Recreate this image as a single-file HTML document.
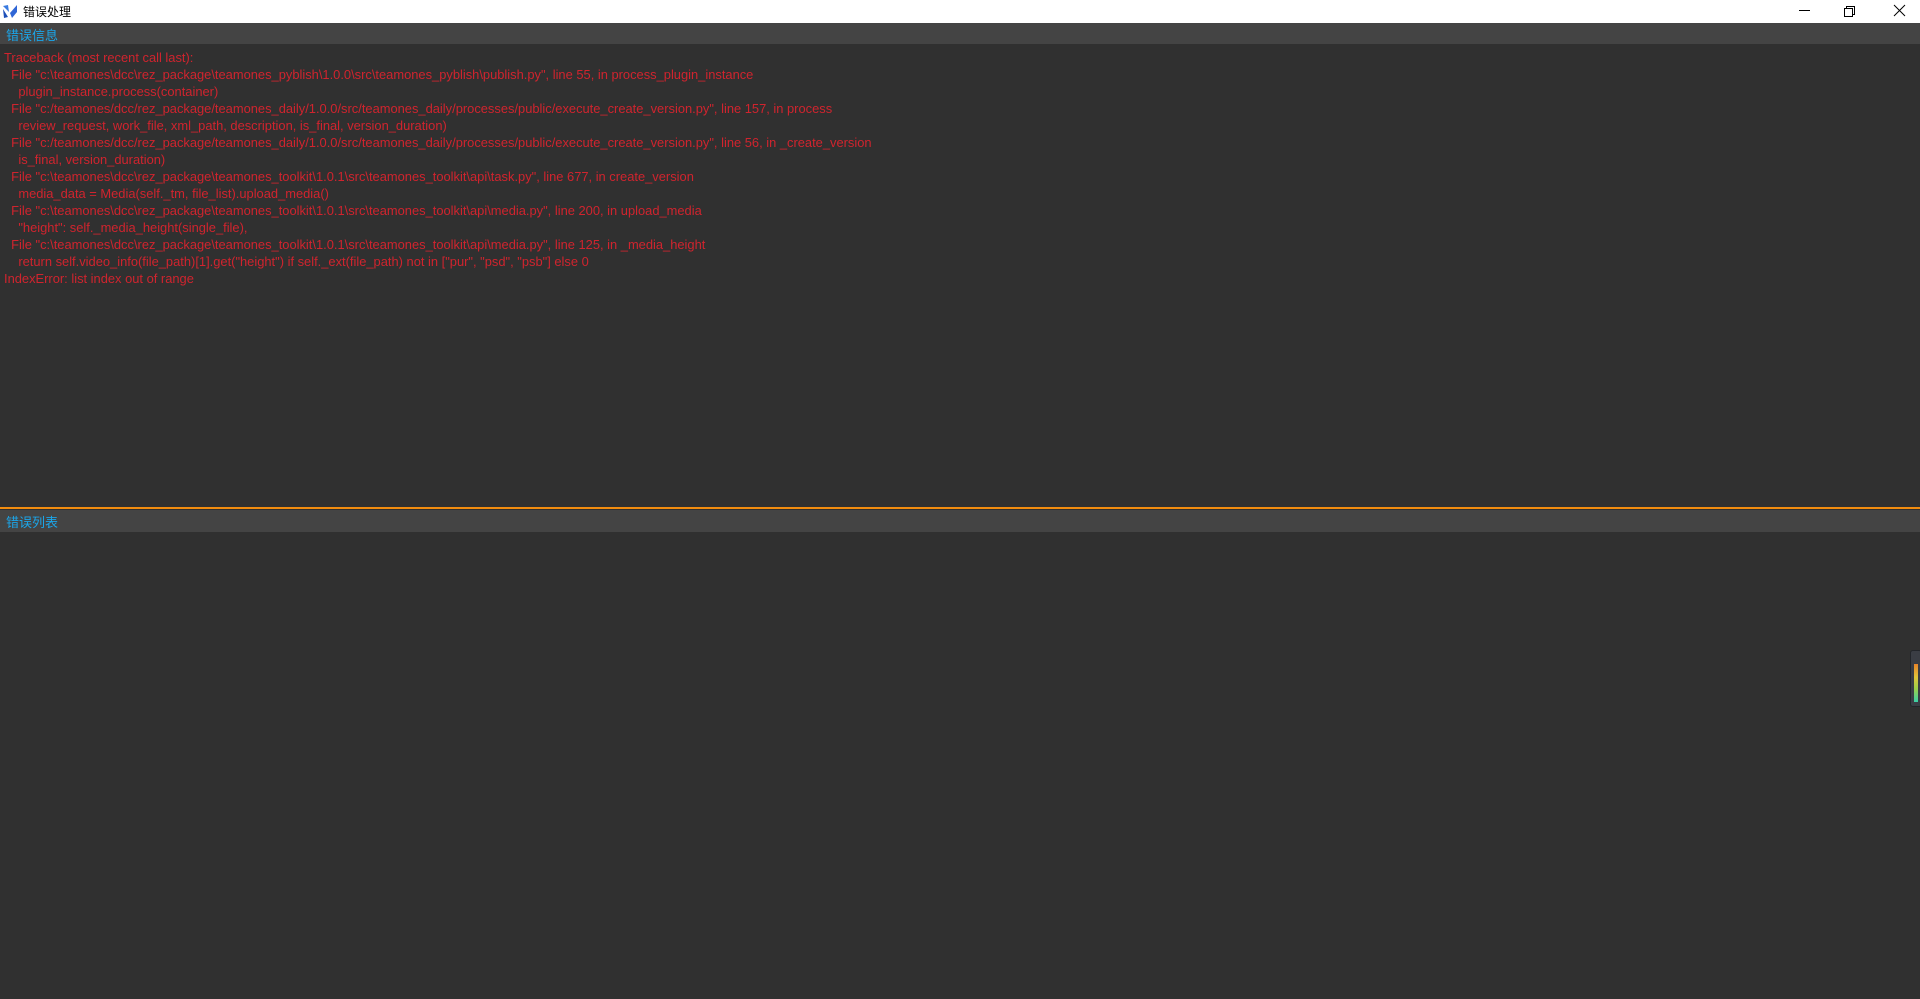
<!DOCTYPE html>
<html><head><meta charset="utf-8"><style>
*{margin:0;padding:0;box-sizing:border-box}
body{width:1920px;height:999px;background:#303030;font-family:"Liberation Sans","Noto Sans CJK SC",sans-serif;overflow:hidden;position:relative}
.title{position:absolute;left:0;top:0;width:1920px;height:23px;background:#fff}
.title .t{position:absolute;left:23px;top:3px;font-size:12px;color:#000}
.hdr{position:absolute;left:0;width:1920px;height:21px;background:#444}
.hdr span{position:absolute;left:6px;top:2px;font-size:13px;color:#1ba6ea}
pre{position:absolute;left:4px;top:49px;font-family:"Liberation Sans",sans-serif;font-size:12.9px;line-height:17px;color:#d0242e;letter-spacing:0;white-space:pre}
.orange{position:absolute;left:0;top:507px;width:1920px;height:2px;background:#f28c0f}
</style></head><body>
<div class="title">
<svg style="position:absolute;left:2px;top:3px" width="16" height="16" viewBox="0 0 16 16"><path d="M1 3 L6 2 L7 9 Z" fill="#3a7be0"/><path d="M1 6 L6 14 L2 15 Z" fill="#1d4fb8"/><path d="M8 10 L15 2 L15 9 L10 15 Z" fill="#2f66d6"/></svg>
<span class="t">错误处理</span>
<svg style="position:absolute;left:1797px;top:4px" width="120" height="16" viewBox="0 0 120 16"><path d="M2 6.5H13" stroke="#000" stroke-width="1"/><rect x="47.5" y="4.5" width="8" height="8" fill="none" stroke="#000"/><path d="M49.5 4.5V2.5H57.5V10.5H55.5" fill="none" stroke="#000"/><path d="M97 1L108 12M108 1L97 12" stroke="#000" stroke-width="1"/></svg>
</div>
<div class="hdr" style="top:23px"><span>错误信息</span></div>
<pre>Traceback (most recent call last):
  File "c:\teamones\dcc\rez_package\teamones_pyblish\1.0.0\src\teamones_pyblish\publish.py", line 55, in process_plugin_instance
    plugin_instance.process(container)
  File "c:/teamones/dcc/rez_package/teamones_daily/1.0.0/src/teamones_daily/processes/public/execute_create_version.py", line 157, in process
    review_request, work_file, xml_path, description, is_final, version_duration)
  File "c:/teamones/dcc/rez_package/teamones_daily/1.0.0/src/teamones_daily/processes/public/execute_create_version.py", line 56, in _create_version
    is_final, version_duration)
  File "c:\teamones\dcc\rez_package\teamones_toolkit\1.0.1\src\teamones_toolkit\api\task.py", line 677, in create_version
    media_data = Media(self._tm, file_list).upload_media()
  File "c:\teamones\dcc\rez_package\teamones_toolkit\1.0.1\src\teamones_toolkit\api\media.py", line 200, in upload_media
    "height": self._media_height(single_file),
  File "c:\teamones\dcc\rez_package\teamones_toolkit\1.0.1\src\teamones_toolkit\api\media.py", line 125, in _media_height
    return self.video_info(file_path)[1].get("height") if self._ext(file_path) not in ["pur", "psd", "psb"] else 0
IndexError: list index out of range</pre>
<div class="orange"></div>
<div class="hdr" style="top:510px;height:22px"><span>错误列表</span></div>
<div style="position:absolute;left:1910px;top:650px;width:12px;height:57px;background:#3a3d44;border:1px solid #22252a;border-radius:3px">
<div style="position:absolute;left:3px;top:13px;width:4px;height:38px;background:linear-gradient(#e8832a,#e0c53a 35%,#9bd04a 65%,#3ad0a8)"></div>
</div>
</body></html>
